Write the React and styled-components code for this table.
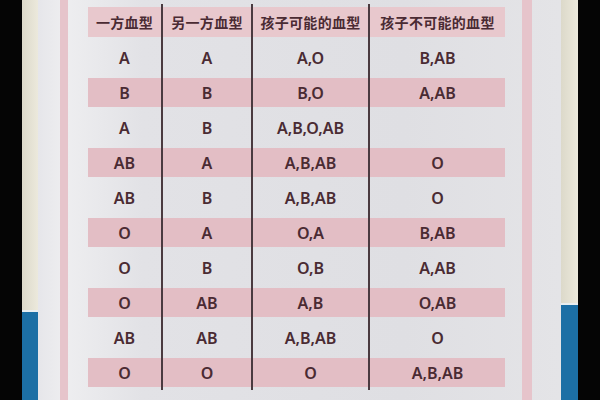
import styled, { createGlobalStyle } from 'styled-components'

const GlobalStyle = createGlobalStyle`
    html, body {
        margin: 0;
        padding: 0;
        background: #000;
    }
    body {
        font-family: "Noto Sans", "Noto Sans CJK SC", sans-serif;
    }
`

const headers = ["一方血型", "另一方血型", "孩子可能的血型", "孩子不可能的血型"]

const rows = [
    ["A", "A", "A,O", "B,AB"],
    ["B", "B", "B,O", "A,AB"],
    ["A", "B", "A,B,O,AB", ""],
    ["AB", "A", "A,B,AB", "O"],
    ["AB", "B", "A,B,AB", "O"],
    ["O", "A", "O,A", "B,AB"],
    ["O", "B", "O,B", "A,AB"],
    ["O", "AB", "A,B", "O,AB"],
    ["AB", "AB", "A,B,AB", "O"],
    ["O", "O", "O", "A,B,AB"],
]

const Page = styled.div`
    display: flex;
    width: 600px;
    height: 400px;
    overflow: hidden;
    background: #000;
`
const Black = styled.div`
    width: ${p => p.w}px;
    flex-shrink: 0;
    background: #050505;
`
const Wall = styled.div`
    width: ${p => p.w}px;
    flex-shrink: 0;
    display: flex;
    flex-direction: column;
    background: linear-gradient(90deg, #dcd9ca, #ece9dc);
`
const WallTop = styled.div`
    height: ${p => p.h}px;
`
const WallBlue = styled.div`
    flex: 1;
    background: #1c6fa5;
    border-top: 2px solid #e9eef0;
`
const Poster = styled.div`
    flex: 1;
    display: flex;
    background: linear-gradient(90deg, #e6e6ea 0%, #eeeef0 5%, #e2e2e6 20%, #dfdfe3 70%, #e4e4e7 100%);
`
const Stripe = styled.div`
    width: ${p => p.w}px;
    flex-shrink: 0;
    background: #e6c4cb;
    margin-left: ${p => p.ml}px;
    margin-right: ${p => p.mr}px;
`
const Table = styled.div`
    display: grid;
    grid-template-columns: 75px 90px 117px 135px;
    grid-auto-rows: 35px;
    grid-template-rows: 36px;
    padding-top: 4px;
    align-self: flex-start;
`
const Cell = styled.div`
    display: flex;
    align-items: stretch;
    border-right: ${p => (p.last ? "none" : "2px solid #4a3a40")};
`
const Band = styled.div`
    flex: 1;
    margin: 3px 0;
    display: flex;
    align-items: center;
    justify-content: center;
    background: ${p => (p.head ? "#e8c8cd" : p.shaded ? "#e3bec5" : "transparent")};
    color: #4a2b33;
    font-size: ${p => (p.head ? "14px" : "16px")};
    font-weight: ${p => (p.head ? 700 : 600)};
    letter-spacing: ${p => (p.head ? "0.3px" : "0")};
`

const App = () => {
    return (<>
        <GlobalStyle />
        <Page>
            <Black w={22} />
            <Wall w={16}>
                <WallTop h={310} />
                <WallBlue />
            </Wall>
            <Poster>
                <Stripe w={8} ml={22} mr={20} />
                <Table>
                    {headers.map((h, i) => (
                        <Cell key={h} last={i === 3}>
                            <Band head>{h}</Band>
                        </Cell>
                    ))}
                    {rows.map((r, ri) =>
                        r.map((v, ci) => (
                            <Cell key={ri + "-" + ci} last={ci === 3}>
                                <Band shaded={ri % 2 === 1}>{v}</Band>
                            </Cell>
                        ))
                    )}
                </Table>
                <Stripe w={10} ml={17} mr={28} />
            </Poster>
            <Wall w={17}>
                <WallTop h={303} />
                <WallBlue />
            </Wall>
            <Black w={22} />
        </Page>
    </>)
}
export default App
